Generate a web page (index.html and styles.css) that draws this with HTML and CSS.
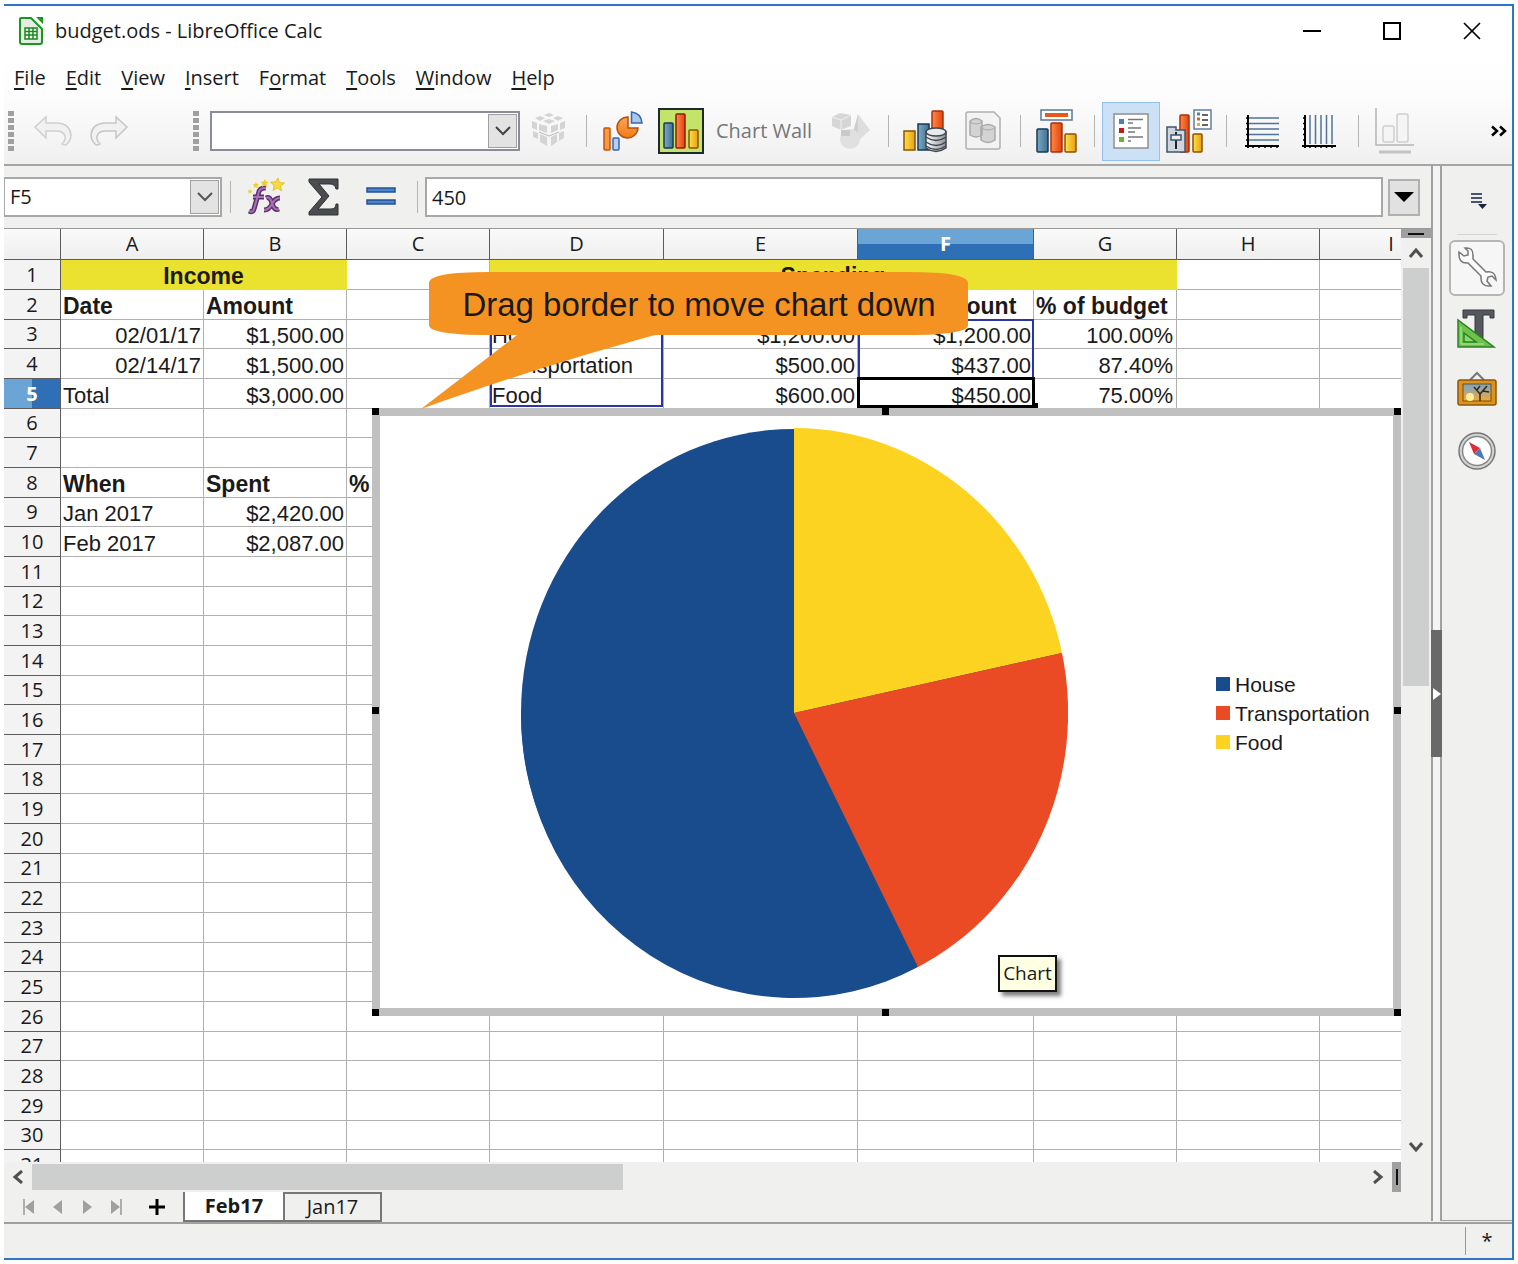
FILE: index.html
```html
<!DOCTYPE html>
<html lang="en">
<head>
<meta charset="utf-8">
<title>budget.ods - LibreOffice Calc</title>
<link rel="stylesheet" href="styles.css">
</head>
<body>
<svg class="defs" width="0" height="0" aria-hidden="true">
  <defs>
    <linearGradient id="blue"><stop offset="0" stop-color="#7fa9c4"/><stop offset="1" stop-color="#3f6f92"/></linearGradient>
    <linearGradient id="red"><stop offset="0" stop-color="#ff8a4a"/><stop offset="1" stop-color="#e2420d"/></linearGradient>
    <linearGradient id="gold"><stop offset="0" stop-color="#ffe04a"/><stop offset="1" stop-color="#e79f12"/></linearGradient>
    <linearGradient id="orange" x2="0" y2="1"><stop offset="0" stop-color="#f9a45a"/><stop offset="1" stop-color="#f47a14"/></linearGradient>
    <linearGradient id="metal"><stop offset="0" stop-color="#fff"/><stop offset="1" stop-color="#8c929a"/></linearGradient>
    <linearGradient id="sky" x2="0" y2="1"><stop offset="0" stop-color="#6fa6d8"/><stop offset="1" stop-color="#f7a830"/></linearGradient>
  </defs>
</svg>
<div class="window">
  <header class="titlebar">
    <svg class="app-icon" width="26" height="30" viewBox="0 0 26 30"><path d="M3 2H13L24 13V26Q24 28 22 28H4Q2 28 2 26V3Q2 2 3 2Z" fill="#e6ece4" stroke="#18981c" stroke-width="2"/><path d="M18 1H25V8Z" fill="#18981c"/><path d="M7 12H19V23H7ZM7 15.500H19M7 19H19M11 12V23M15 12V23" fill="#fff" stroke="#18881c" stroke-width="1.500"/></svg>
    <h1>budget.ods - LibreOffice Calc</h1>
    <button class="win-btn" aria-label="Minimize"><svg width="20" height="20"><path d="M1 10H19" stroke="#000" stroke-width="2"/></svg></button>
    <button class="win-btn" aria-label="Maximize"><svg width="20" height="20"><path d="M2 2H18V18H2Z" fill="none" stroke="#000" stroke-width="2"/></svg></button>
    <button class="win-btn" aria-label="Close"><svg width="20" height="20"><path d="M2 2L18 18M18 2L2 18" stroke="#000" stroke-width="1.700"/></svg></button>
  </header>
  <nav class="menubar">
    <button><u>F</u>ile</button><button><u>E</u>dit</button><button><u>V</u>iew</button><button><u>I</u>nsert</button><button>F<u>o</u>rmat</button><button><u>T</u>ools</button><button><u>W</u>indow</button><button><u>H</u>elp</button>
  </nav>
  <div class="toolbar">
    <span class="grip"></span>
    <button class="tool small" disabled aria-label="Undo"><svg width="40" height="32" viewBox="0 0 40 32"><path d="M2 12L13 2V8H25Q37 9 38 20Q38 25 34 29Q32 31 29 29Q33 25 32 21Q30 16 24 16H13V23Z" fill="#f1f1f1" stroke="#cfcfcf" stroke-width="1.500"/></svg></button>
    <button class="tool small" disabled aria-label="Redo"><svg width="40" height="32" viewBox="0 0 40 32"><path d="M38 12L27 2V8H15Q3 9 2 20Q2 25 6 29Q8 31 11 29Q7 25 8 21Q10 16 16 16H27V23Z" fill="#f1f1f1" stroke="#c6c6c6" stroke-width="1.500"/></svg></button>
    <span class="grip second"></span>
    <span class="combo chart-element">
      <select aria-label="Select chart element"><option></option></select>
      <span class="drop"><svg width="16" height="10"><path d="M1 1L8 8L15 1" fill="none" stroke="#444" stroke-width="2"/></svg></span>
    </span>
    <button class="tool" disabled aria-label="Format selection"><svg width="36" height="38" viewBox="0 0 36 38"><g fill="#d4d4d4"><path d="M18 1l5 2-5 2-5-2zM9 4l5 2-5 3-5-3zM27 4l5 2-5 3-5-3zM18 7l6 2-6 3-6-3z"/><path d="M1 9l5 2v7l-5-2zM8 12l8 2v7l-8-3zM20 14l7-2v6l-7 3zM29 11l5-2v7l-5 2zM2 19l5 2v6l-5-2zM9 22l7 3v9l-7-4zM20 25l6-3v8l-6 4zM28 21l5-2v7l-5 3z"/></g><path d="M8 20L18 24L28 20" stroke="#bbb" fill="none"/></svg></button>
    <span class="sep"></span>
    <button class="tool" aria-label="Chart type"><svg width="42" height="42" viewBox="0 0 42 42"><rect x="2" y="18" width="6" height="22" rx="1" fill="#f79a45" stroke="#c65308" stroke-width="1.500"/><rect x="11" y="28" width="6" height="12" rx="1" fill="#b5d1f2" stroke="#3665b0" stroke-width="1.500"/><path d="M26 7A10.500 10.500 0 1 0 36 18H26Z" fill="url(#orange)" stroke="#b4500a" stroke-width="1.500"/><path d="M29.500 2Q39 3 40 13H29.500Z" fill="#a9c8ec" stroke="#3665b0" stroke-width="1.500"/></svg></button>
    <button class="tool" aria-label="Chart wall"><svg width="46" height="46" viewBox="0 0 46 46"><rect x="1" y="1" width="44" height="44" fill="#c4e36a" stroke="#1c2a2c" stroke-width="2"/><rect x="6" y="15" width="9" height="25" rx="1" fill="url(#blue)" stroke="#153a58" stroke-width="1.500"/><rect x="18" y="6" width="9" height="34" rx="1" fill="url(#red)" stroke="#8e1f05" stroke-width="1.500"/><rect x="31" y="22" width="9" height="18" rx="1" fill="url(#gold)" stroke="#8a5405" stroke-width="1.500"/></svg></button>
    <span class="tool-text">Chart Wall</span>
    <button class="tool" disabled aria-label="Chart area"><svg width="42" height="40" viewBox="0 0 42 40"><path d="M2 6L10 2L21 4V15L11 19L2 15Z" fill="#d6d6d6"/><path d="M2 6L11 9L21 4M11 9V19" stroke="#eee" fill="none"/><path d="M28 3L40 19L28 30Z" fill="#dedede"/><path d="M28 3L22 24L28 30Z" fill="#cfcfcf"/><circle cx="20" cy="28" r="10" fill="#e0e0e0"/><path d="M11 19h9v6h-9z" fill="#c9c9c9"/></svg></button>
    <span class="sep"></span>
    <button class="tool" aria-label="Data ranges"><svg width="46" height="44" viewBox="0 0 46 44"><rect x="2" y="22" width="11" height="19" fill="url(#gold)" stroke="#8a5405" stroke-width="1.500"/><rect x="16" y="15" width="11" height="26" fill="url(#blue)" stroke="#153a58" stroke-width="1.500"/><rect x="30" y="2" width="11" height="34" rx="1" fill="url(#red)" stroke="#a8300a" stroke-width="1.500"/><path d="M24 23V39Q34 46 44 39V23Z" fill="url(#metal)" stroke="#40474f" stroke-width="1.500"/><ellipse cx="34" cy="23" rx="10" ry="4" fill="#e8eaec" stroke="#40474f" stroke-width="1.500"/><path d="M24 28Q34 35 44 28M24 33Q34 40 44 33M24 37Q34 44 44 37" fill="none" stroke="#40474f" stroke-width="1.500"/></svg></button>
    <button class="tool" disabled aria-label="Data table"><svg width="36" height="40" viewBox="0 0 36 40"><path d="M1 3Q1 1 3 1H29L35 7V36Q35 38 33 38H3Q1 38 1 36Z" fill="#f3f3f3" stroke="#b0b0b0" stroke-width="1.500"/><path d="M5 10V24Q11 28 17 24V10Q11 5 5 10ZM16 16V29Q23 34 30 29V16Q23 11 16 16Z" fill="#d3d3d3" stroke="#aaa" stroke-width="1.500"/><path d="M5 11Q11 15 17 11M16 17Q23 21 30 17" fill="none" stroke="#aaa"/></svg></button>
    <span class="sep"></span>
    <button class="tool" aria-label="Titles"><svg width="44" height="46" viewBox="0 0 44 46"><rect x="6" y="2" width="31" height="10" fill="#fff" stroke="#58779a" stroke-width="1.500"/><rect x="10" y="5" width="23" height="4" fill="#e85a1a"/><rect x="2" y="21" width="11" height="23" rx="1" fill="url(#blue)" stroke="#153a58" stroke-width="1.500"/><rect x="16" y="15" width="11" height="29" rx="1" fill="url(#red)" stroke="#a8300a" stroke-width="1.500"/><rect x="30" y="26" width="11" height="18" rx="1" fill="url(#gold)" stroke="#8a5405" stroke-width="1.500"/></svg></button>
    <span class="sep"></span>
    <button class="tool active" aria-label="Legend on/off" aria-pressed="true"><svg width="36" height="36" viewBox="0 0 36 36"><rect x="1" y="1" width="34" height="34" fill="#fff" stroke="#8f8f8f" stroke-width="1.500"/><rect x="6" y="6" width="5" height="5" fill="#4d7fb5"/><rect x="6" y="15" width="5" height="5" fill="#c41a1a"/><rect x="6" y="24" width="5" height="5" fill="#6cb52c"/><path d="M15 6.500H30M15 10H20M15 15H28M15 19H22M15 24H30M15 28H18" stroke="#777" stroke-width="1.500"/></svg></button>
    <button class="tool" aria-label="Legend"><svg width="46" height="46" viewBox="0 0 46 46"><rect x="14" y="7" width="9" height="37" rx="1" fill="url(#red)" stroke="#a8300a" stroke-width="1.500"/><rect x="27" y="26" width="9" height="18" rx="1" fill="url(#gold)" stroke="#8a5405" stroke-width="1.500"/><path d="M1 19H10V22H19V44H1Z" fill="#cfd6dd" stroke="#3f556e" stroke-width="1.500"/><path d="M10 24V41" stroke="#222" stroke-width="2"/><rect x="5" y="27" width="10" height="5" fill="#eef2f6" stroke="#3f556e" stroke-width="1.500"/><rect x="28" y="2" width="17" height="19" fill="#fff" stroke="#627f9c" stroke-width="1.500"/><path d="M31 6h3" stroke="#4d7fb5" stroke-width="3"/><path d="M31 11h3" stroke="#e85a1a" stroke-width="3"/><path d="M31 16.500h3" stroke="#e9b020" stroke-width="3"/><path d="M36 7H42M36 12H42M36 17H42" stroke="#333" stroke-width="1.500"/></svg></button>
    <span class="sep"></span>
    <button class="tool" aria-label="Horizontal grids"><svg width="38" height="36" viewBox="0 0 38 36"><path d="M3 5H35M3 10.500H35M3 16H35M3 21.500H35M3 27H35" stroke="#50749a" stroke-width="1.500"/><path d="M4 2V35M1 33H35" stroke="#000" stroke-width="2"/><path d="M2 5h3M2 10.500h3M2 16h3M2 21.500h3M2 27h3M9 32v3M15 32v3M21 32v3M27 32v3M33 32v3" stroke="#000" stroke-width="1.500"/></svg></button>
    <button class="tool" aria-label="Vertical grids"><svg width="38" height="36" viewBox="0 0 38 36"><path d="M8 2V31M13.500 2V31M19 2V31M24.500 2V31M30 2V31" stroke="#50749a" stroke-width="1.500"/><path d="M3 2V35M0 33H34" stroke="#000" stroke-width="2"/><path d="M1 5h3M1 10.500h3M1 16h3M1 21.500h3M1 27h3M8 32v3M13.500 32v3M19 32v3M24.500 32v3M30 32v3" stroke="#000" stroke-width="1.500"/></svg></button>
    <span class="sep"></span>
    <button class="tool" disabled aria-label="X axis"><svg width="40" height="48" viewBox="0 0 40 48"><path d="M1 1V38H39" fill="none" stroke="#b5b5b5" stroke-width="1.500"/><path d="M4 45H36" stroke="#c4c4c4" stroke-width="3"/><rect x="8" y="19" width="11" height="16" rx="2" fill="#f5f5f5" stroke="#cfcfcf" stroke-width="1.500"/><rect x="22" y="7" width="11" height="28" rx="2" fill="#f5f5f5" stroke="#cfcfcf" stroke-width="1.500"/></svg></button>
    <button class="more" aria-label="More tools"><svg width="16" height="12" viewBox="0 0 16 12"><path d="M1 1.500L6 6L1 10.500M9 1.500L14 6L9 10.500" fill="none" stroke="#000" stroke-width="2.500"/></svg></button>
  </div>

  <div class="workspace">
    <main class="document">
      <div class="formula-bar">
        <span class="combo name-box">
          <select aria-label="Name box"><option>F5</option></select>
          <span class="drop"><svg width="16" height="10"><path d="M1 1L8 8L15 1" fill="none" stroke="#555" stroke-width="2"/></svg></span>
        </span>
        <span class="sep"></span>
        <button class="fx-btn" aria-label="Function wizard"><svg width="40" height="38" viewBox="0 0 40 38"><path d="M19 10Q12 9 11 17L7 31Q6 35 2 33M6 19H17" fill="none" stroke="#5f2f6c" stroke-width="5"/><path d="M19 10Q12 9 11 17L7 31Q6 35 2 33M6 19H17" fill="none" stroke="#a873b4" stroke-width="2"/><path d="M19 20Q23 18 25 25Q27 33 32 31M33 20Q28 20 25 26Q22 32 17 32" fill="none" stroke="#5f2f6c" stroke-width="5"/><path d="M19 20Q23 18 25 25Q27 33 32 31M33 20Q28 20 25 26Q22 32 17 32" fill="none" stroke="#a873b4" stroke-width="2"/><path d="M31 0l1.500 4.500 5 .5-4 3 1 5-4-3-4.500 2.500 1-5-3.500-3.500 5 0z" fill="#f6dc3a" stroke="#d6b21a" stroke-width=".7"/><path d="M18 1l1 2.500 3 .5-2.500 2 .5 3-2.500-1.500-2.500 1.500.5-3-2-2 3-.5zM9 4l1 2 2 .3-1.500 1.500.3 2.200-2-1-2 1 .4-2.200-1.500-1.500 2.300-.3zM3 11l.7 1.500 1.800.2-1.300 1.300.3 1.800-1.500-1-1.600 1 .3-1.800-1.300-1.300 1.800-.2z" fill="#f0d02c"/></svg></button>
        <button class="fx-btn" aria-label="Sum"><svg width="32" height="38" viewBox="0 0 32 38"><path d="M1 1H30V11H28Q27 6 22 6H11L21 18L10 31H23Q28 31 28 26H30V37H1V34L14 19L1 4Z" fill="#4a4c50" stroke="#2e3034"/></svg></button>
        <button class="fx-btn" aria-label="Formula"><svg width="30" height="20" viewBox="0 0 30 20"><path d="M1 1h28v4H1zM1 13h28v4H1z" fill="#4a86cc" stroke="#235193" stroke-width="1.500"/></svg></button>
        <span class="sep"></span>
        <input class="formula-input" aria-label="Input line" value="450">
        <button class="expand" aria-label="Expand formula bar"><svg width="20" height="12"><path d="M0 1H20L10 11Z"/></svg></button>
      </div>
      <div class="grid-area">
        <div class="sheet">
          <table class="cells">
            <colgroup><col class="c-head"><col class="c-std"><col class="c-std"><col class="c-std"><col class="c-d"><col class="c-e"><col class="c-f"><col class="c-std"><col class="c-std"><col class="c-std"></colgroup>
            <thead><tr><th></th><th>A</th><th>B</th><th>C</th><th>D</th><th>E</th><th class="current">F</th><th>G</th><th>H</th><th>I</th></tr></thead>
            <tbody>
            <tr><th>1</th><td class="band" colspan="2">Income</td><td></td><td class="band" colspan="4">Spending</td><td></td><td></td></tr>
            <tr class="heads"><th>2</th><td>Date</td><td>Amount</td><td></td><td></td><td></td><td>Spent Amount</td><td>% of budget</td><td></td><td></td></tr>
            <tr><th>3</th><td class="num">02/01/17</td><td class="num">$1,500.00</td><td></td><td>House</td><td class="num">$1,200.00</td><td class="num">$1,200.00</td><td class="num">100.00%</td><td></td><td></td></tr>
            <tr><th>4</th><td class="num">02/14/17</td><td class="num">$1,500.00</td><td></td><td>Transportation</td><td class="num">$500.00</td><td class="num">$437.00</td><td class="num">87.40%</td><td></td><td></td></tr>
            <tr><th class="current">5</th><td>Total</td><td class="num">$3,000.00</td><td></td><td>Food</td><td class="num">$600.00</td><td class="num">$450.00</td><td class="num">75.00%</td><td></td><td></td></tr>
            <tr><th>6</th><td></td><td></td><td></td><td></td><td></td><td></td><td></td><td></td><td></td></tr>
            <tr><th>7</th><td></td><td></td><td></td><td></td><td></td><td></td><td></td><td></td><td></td></tr>
            <tr class="heads"><th>8</th><td>When</td><td>Spent</td><td>%</td><td></td><td></td><td></td><td></td><td></td><td></td></tr>
            <tr><th>9</th><td>Jan 2017</td><td class="num">$2,420.00</td><td></td><td></td><td></td><td></td><td></td><td></td><td></td></tr>
            <tr><th>10</th><td>Feb 2017</td><td class="num">$2,087.00</td><td></td><td></td><td></td><td></td><td></td><td></td><td></td></tr>
            <tr><th>11</th><td></td><td></td><td></td><td></td><td></td><td></td><td></td><td></td><td></td></tr>
            <tr><th>12</th><td></td><td></td><td></td><td></td><td></td><td></td><td></td><td></td><td></td></tr>
            <tr><th>13</th><td></td><td></td><td></td><td></td><td></td><td></td><td></td><td></td><td></td></tr>
            <tr><th>14</th><td></td><td></td><td></td><td></td><td></td><td></td><td></td><td></td><td></td></tr>
            <tr><th>15</th><td></td><td></td><td></td><td></td><td></td><td></td><td></td><td></td><td></td></tr>
            <tr><th>16</th><td></td><td></td><td></td><td></td><td></td><td></td><td></td><td></td><td></td></tr>
            <tr><th>17</th><td></td><td></td><td></td><td></td><td></td><td></td><td></td><td></td><td></td></tr>
            <tr><th>18</th><td></td><td></td><td></td><td></td><td></td><td></td><td></td><td></td><td></td></tr>
            <tr><th>19</th><td></td><td></td><td></td><td></td><td></td><td></td><td></td><td></td><td></td></tr>
            <tr><th>20</th><td></td><td></td><td></td><td></td><td></td><td></td><td></td><td></td><td></td></tr>
            <tr><th>21</th><td></td><td></td><td></td><td></td><td></td><td></td><td></td><td></td><td></td></tr>
            <tr><th>22</th><td></td><td></td><td></td><td></td><td></td><td></td><td></td><td></td><td></td></tr>
            <tr><th>23</th><td></td><td></td><td></td><td></td><td></td><td></td><td></td><td></td><td></td></tr>
            <tr><th>24</th><td></td><td></td><td></td><td></td><td></td><td></td><td></td><td></td><td></td></tr>
            <tr><th>25</th><td></td><td></td><td></td><td></td><td></td><td></td><td></td><td></td><td></td></tr>
            <tr><th>26</th><td></td><td></td><td></td><td></td><td></td><td></td><td></td><td></td><td></td></tr>
            <tr><th>27</th><td></td><td></td><td></td><td></td><td></td><td></td><td></td><td></td><td></td></tr>
            <tr><th>28</th><td></td><td></td><td></td><td></td><td></td><td></td><td></td><td></td><td></td></tr>
            <tr><th>29</th><td></td><td></td><td></td><td></td><td></td><td></td><td></td><td></td><td></td></tr>
            <tr><th>30</th><td></td><td></td><td></td><td></td><td></td><td></td><td></td><td></td><td></td></tr>
            <tr><th>31</th><td></td><td></td><td></td><td></td><td></td><td></td><td></td><td></td><td></td></tr>
            </tbody>
          </table>
          <div class="range range-labels"></div>
          <div class="range range-values"></div>
          <figure class="chart">
            <svg class="pie" width="548" height="570" viewBox="0 0 548 570" role="img" aria-label="Spending by category">
              <ellipse cx="274" cy="285" rx="273" ry="284" fill="#184c8c"/>
              <path d="M274 285H1A273 284 0 0 0 398 539Z" fill="#184c8c"/>
              <path d="M274 285V0A274 285 0 0 1 542 225Z" fill="#fdd322"/>
              <path d="M274 285L542 225A274 285 0 0 1 398 539Z" fill="#ea4a24"/>
            </svg>
            <ul class="legend">
              <li class="house">House</li>
              <li class="transport">Transportation</li>
              <li class="food">Food</li>
            </ul>
            <i class="handle nw"></i><i class="handle n"></i><i class="handle ne"></i><i class="handle w"></i><i class="handle e"></i><i class="handle sw"></i><i class="handle s"></i><i class="handle se"></i>
          </figure>
          <div class="cell-cursor"></div>
          <div class="tooltip">Chart</div>
          <div class="callout">
            <svg class="callout-shape" width="548" height="138" viewBox="0 0 548 138"><path d="M8 11Q8 0 68 0H487Q547 0 547 11V53Q547 63 487 63H234C150 86 70 112 0 137L96 63H68Q8 63 8 53Z" fill="#f59322"/></svg>
            <span>Drag border to move chart down</span>
          </div>
        </div>
        <div class="vscroll">
          <span class="split-h"></span>
          <button aria-label="Scroll up"><svg width="14" height="12"><path d="M1 10L7 3L13 10" fill="none" stroke="#505050" stroke-width="3"/></svg></button>
          <span class="vthumb"></span>
          <button aria-label="Scroll down"><svg width="14" height="12"><path d="M1 2L7 9L13 2" fill="none" stroke="#505050" stroke-width="3"/></svg></button>
        </div>
      </div>
      <div class="hscroll">
        <button aria-label="Scroll left"><svg width="12" height="14"><path d="M10 1L3 7L10 13" fill="none" stroke="#505050" stroke-width="3"/></svg></button>
        <span class="hthumb"></span>
        <button aria-label="Scroll right"><svg width="12" height="14"><path d="M2 1L9 7L2 13" fill="none" stroke="#505050" stroke-width="3"/></svg></button>
        <span class="split-v"></span>
      </div>
      <div class="tabs">
        <button class="nav" aria-label="First sheet"><svg width="12" height="16"><path d="M1 0V16" stroke="#999" stroke-width="1.500"/><path d="M11 1V15L2 8Z" fill="#a0a0a0"/></svg></button>
        <button class="nav" aria-label="Previous sheet"><svg width="12" height="16"><path d="M10 1V15L1 8Z" fill="#a0a0a0"/></svg></button>
        <button class="nav" aria-label="Next sheet"><svg width="12" height="16"><path d="M2 1V15L11 8Z" fill="#a0a0a0"/></svg></button>
        <button class="nav" aria-label="Last sheet"><svg width="12" height="16"><path d="M11 0V16" stroke="#999" stroke-width="1.500"/><path d="M1 1V15L10 8Z" fill="#a0a0a0"/></svg></button>
        <button class="add" aria-label="Add sheet"><svg width="16" height="16"><path d="M8 0V16M0 8H16" stroke="#000" stroke-width="3"/></svg></button>
        <button class="tab selected">Feb17</button>
        <button class="tab">Jan17</button>
      </div>
    </main>
    <div class="splitter"><button aria-label="Hide sidebar"><svg width="10" height="14"><path d="M1 1V13L9 7Z" fill="#fff"/></svg></button></div>
    <aside class="sidebar">
      <button class="side-menu" aria-label="Sidebar settings"><svg width="18" height="18"><path d="M1 2H12M1 6H12M1 10H12" stroke="#4a5470" stroke-width="2"/><path d="M8 12H17L12.500 17Z" fill="#1d2440"/></svg></button>
      <button class="side-btn on" aria-label="Properties"><svg width="42" height="42" viewBox="0 0 42 42"><path d="M3 5L8 9L12 8L12 4L9 1Q17 0 17 8L17 12L30 25Q39 23 40 33L36 29L32 30L31 34L35 39Q24 40 25 29L12 16Q2 17 3 5Z" fill="#fafafa" stroke="#777" stroke-width="1.500"/></svg></button>
      <button class="side-btn" aria-label="Styles"><svg width="42" height="42" viewBox="0 0 42 42"><path d="M7 2H38V10H34V7H27V30H19V7H11V10H7Z" fill="#55585c" stroke="#37393c"/><path d="M2 12V39H38Z" fill="#6cc24a" stroke="#2c8320" stroke-width="1.500"/><path d="M8 25V34H20Z" fill="#8fd870" stroke="#2c8320" stroke-width="1.500"/><path d="M5 19V36H28" fill="none" stroke="#b6eb9b"/></svg></button>
      <button class="side-btn" aria-label="Gallery"><svg width="42" height="42" viewBox="0 0 42 42"><path d="M14 11L21 4L28 11" fill="none" stroke="#777" stroke-width="2"/><rect x="2" y="11" width="38" height="25" rx="2" fill="#dc9420" stroke="#8f5608" stroke-width="1.500"/><rect x="7" y="15" width="28" height="17" fill="url(#sky)" stroke="#7c4c08"/><circle cx="14" cy="28" r="4" fill="#fff0a0"/><path d="M24 32V25L18 18M24 25L31 17M27 22L33 23M21 21L24 17" stroke="#3a2a10" stroke-width="1.500" fill="none"/></svg></button>
      <button class="side-btn" aria-label="Navigator"><svg width="42" height="42" viewBox="0 0 42 42"><circle cx="21" cy="21" r="18" fill="#d4d4d4" stroke="#777" stroke-width="1.500"/><circle cx="21" cy="21" r="14.500" fill="#fcfcfc" stroke="#888" stroke-width="1.500"/><path d="M13 12L24 18L18 24Z" fill="#df2c36"/><path d="M29 30L24 18L18 24Z" fill="#4d7bb5"/></svg></button>
    </aside>
  </div>
  <footer class="statusbar"><span class="modified">*</span></footer>
</div>
</body>
</html>
```
FILE: styles.css
```css
* { box-sizing: border-box; }
body { margin: 0; background: #fff; color: #1a1a1a; font: 20px/28px "Open Sans", "Noto Sans", sans-serif; }
button { margin: 0; padding: 0; border: 0; background: none; color: inherit; font: inherit; display: flex; align-items: center; justify-content: center; flex: none; }
svg { display: block; flex: none; }
.defs { position: absolute; }

.window { margin: 4px; height: calc(100vh - 8px); min-height: 600px; display: flex; flex-direction: column; border: solid #2b78c6; border-width: 2px 2px 2px 0; background: #f0f0ef; }

.titlebar { flex: none; height: 50px; padding: 0 0 0 14px; display: flex; align-items: center; background: #fff; }
.titlebar h1 { flex: 1; margin: 0 0 0 11px; font-size: 20px; font-weight: 400; }
.win-btn { width: 80px; height: 48px; }

.menubar { flex: none; height: 44px; padding-left: 10px; display: flex; align-items: center; gap: 20px; background: linear-gradient(#fff, #fcfcfc); }
.menubar u { text-underline-offset: 3px; }

.toolbar { flex: none; height: 66px; padding: 0 5px 2px 4px; display: flex; align-items: center; background: linear-gradient(#fcfcfc, #f0f0f0); border-bottom: 2px solid #a5a5a5; }
.grip { flex: none; width: 6px; height: 40px; margin-right: 11px; background: repeating-linear-gradient(#a0a0a0 0 5px, transparent 5px 7px); }
.grip.second { margin: 0 11px 0 56px; }
.tool { width: 58px; height: 59px; }
.tool.small { width: 56px; }
.tool.active { background: #cce1f5; border: 1px solid #92c0e8; }
.tool-text { flex: none; width: 112px; padding-left: 6px; color: #777; }
.sep { flex: none; width: 16px; height: 32px; background: linear-gradient(#b4b4b4, #b4b4b4) center / 1px 100% no-repeat; }
.more { margin-left: auto; }

.combo { position: relative; flex: none; border: 2px solid #8a8d98; background: #fff; height: 40px; }
.combo select { appearance: none; width: 100%; height: 100%; padding: 0 36px 0 5px; border: 0; background: none; font: inherit; color: inherit; }
.combo .drop { position: absolute; top: 1px; right: 1px; bottom: 1px; width: 29px; display: flex; align-items: center; justify-content: center; background: #e3e3e3; border: 1px solid #a0a0a0; pointer-events: none; }
.chart-element { width: 310px; }
.name-box { width: 218px; border-left-width: 1px; border-color: #a8a8a8; }

.workspace { flex: 1; min-height: 0; display: flex; border-bottom: 2px solid #a0a0a0; }
.document { flex: 1; min-width: 0; display: flex; flex-direction: column; }

.formula-bar { flex: none; height: 62px; padding-right: 11px; display: flex; align-items: center; }
.fx-btn { width: 57px; height: 40px; }
.formula-input { flex: 1; min-width: 0; height: 40px; padding: 0 5px; border: 2px solid #a8a8a8; background: #fff; font: inherit; color: inherit; }
.expand { width: 32px; height: 37px; margin-left: 5px; background: #e1e1e1; border: 2px solid #b0b0b0; }

.grid-area { flex: 1; min-height: 0; display: flex; border-top: 1px solid #999; }
.sheet { position: relative; flex: 1; min-width: 0; overflow: hidden; background: #fff; }
.cells { table-layout: fixed; width: 1459px; border-collapse: separate; border-spacing: 0; font: 22px/24px "Liberation Sans", Arial, sans-serif; }
.c-head { width: 57px; }
.c-std { width: 143px; }
.c-d { width: 174px; }
.c-e { width: 194px; }
.c-f { width: 176px; }
.cells th { padding: 0; border: solid #5c5c5c; border-width: 0 1px 1px 0; background: #f3f3f3; font: 400 20px/24px "Open Sans", "Noto Sans", sans-serif; text-align: center; }
.cells thead tr { height: 31px; }
.cells thead th { background: linear-gradient(#fafafa, #efefef); }
.cells thead th.current { background: linear-gradient(#6ba5d6 50%, #2f6fb6 50%); color: #fff; font-weight: 700; }
.cells tbody th.current { background: linear-gradient(90deg, #6ba5d6 50%, #2f6fb6 50%); color: #fff; font-weight: 700; }
.cells tbody tr { height: 30px; }
.cells tbody tr:nth-child(3n) { height: 29px; }
.cells td { padding: 4px 2px 0; border: solid #b0b0b0; border-width: 0 1px 1px 0; white-space: nowrap; overflow: hidden; color: #1a1a1a; }
.cells td.num { text-align: right; }
.cells td.num:nth-child(8) { padding-right: 3px; }
.cells td.band { padding-top: 2px; background: #eae22f; border-color: #eae22f; text-align: center; font-size: 23px; font-weight: 700; }
.cells .heads td { padding-top: 2px; font-size: 23px; font-weight: 700; }

/* Objects floating over the cells */
.range { position: absolute; top: 90px; border: 2px solid #2b36a4; }
.range-labels { left: 486px; width: 173px; height: 88px; }
.range-values { left: 854px; width: 176px; height: 60px; }
.cell-cursor { position: absolute; left: 853px; top: 148px; width: 178px; height: 31px; border: 3px solid #000; }
.cell-cursor::after { content: ""; position: absolute; right: -6px; bottom: -3px; width: 6px; height: 5px; background: #000; }

.chart { position: absolute; left: 368px; top: 179px; width: 1029px; height: 608px; margin: 0; padding: 2px 0 0 140px; display: flex; align-items: center; border: 8px solid #c0c0c0; background: #fff; }
.legend { margin: 0 0 0 148px; padding: 0; list-style: none; font: 21px/29px "Liberation Sans", Arial, sans-serif; }
.legend li { display: flex; align-items: center; gap: 5px; }
.legend li::before { content: ""; width: 14px; height: 14px; background: currentColor; }
.legend .house::before { background: #184c8c; }
.legend .transport::before { background: #ea4a24; }
.legend .food::before { background: #fdd322; }
.handle { position: absolute; width: 7px; height: 7px; background: #000; }
.nw, .n, .ne { top: -8px; }
.sw, .s, .se { bottom: -8px; }
.nw, .w, .sw { left: -8px; }
.ne, .e, .se { right: -8px; }
.n, .s { left: calc(50% - 5px); }
.w, .e { top: calc(50% - 5px); }

.tooltip { position: absolute; left: 994px; top: 726px; width: 59px; height: 37px; border: 2px solid #111; background: #ffffe1; box-shadow: 4px 4px 4px rgba(0, 0, 0, .5); line-height: 33px; text-align: center; font-size: 19px; }

.callout { position: absolute; left: 417px; top: 43px; width: 548px; height: 64px; padding-left: 8px; text-align: center; font: 33px/66px "Liberation Sans", Arial, sans-serif; white-space: nowrap; }
.callout-shape { position: absolute; left: 0; top: 0; }
.callout span { position: relative; }

.vscroll { flex: none; width: 30px; display: flex; flex-direction: column; }
.split-h { height: 9px; background: linear-gradient(#111, #111) center / 16px 2px no-repeat #a0a0a0; }
.vscroll button { height: 30px; }
.vthumb { height: 418px; margin: 0 2px auto; background: #cdcece; }
.hscroll { flex: none; height: 30px; padding-right: 30px; display: flex; align-items: center; }
.hscroll button { width: 28px; height: 30px; }
.hthumb { width: 591px; height: 26px; margin-right: auto; background: #cdcece; }
.split-v { width: 9px; height: 30px; background: linear-gradient(#111, #111) center / 2px 16px no-repeat #a0a0a0; }

.tabs { flex: none; height: 30px; padding-left: 10px; display: flex; align-items: stretch; }
.nav { width: 29px; }
.add { width: 53px; }
.tab { width: 99px; border: 2px solid #777; font-size: 20px; line-height: 24px; }
.tab.selected { width: 100px; border-top: 0; border-right: 0; background: #fff; font-weight: 700; }

.splitter { flex: none; width: 11px; margin-bottom: 1px; border: solid #a0a0a0; border-width: 0 2px; background: #f4f4f4; display: flex; justify-content: center; align-items: center; }
.splitter button { width: 11px; height: 127px; flex: none; background: #696969; }

.sidebar { flex: none; width: 70px; margin-bottom: 1px; padding-top: 18px; display: flex; flex-direction: column; align-items: center; gap: 5px; border-bottom: 1px solid #a0a0a0; }
.side-menu { width: 40px; height: 51px; padding: 0 0 17px 3px; border-bottom: 1px solid #d5d5d5; }
.side-btn { width: 56px; height: 56px; }
.side-btn.on { border: 2px solid #b5b5b5; border-radius: 6px; background: #f6f6f6; }

.statusbar { flex: none; height: 34px; padding: 3px 0; display: flex; justify-content: flex-end; }
.modified { width: 47px; border-left: 1px solid #999; padding-right: 4px; text-align: center; }
```
